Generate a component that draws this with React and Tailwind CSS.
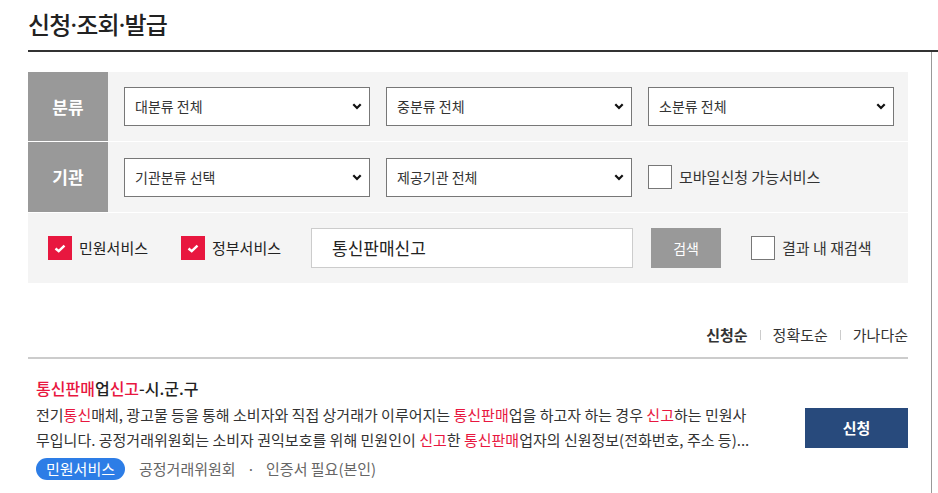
import React from 'react';

const font = { fontFamily: '"Noto Sans CJK KR", "Noto Sans", sans-serif' };
const latin = { fontFamily: '"Noto Sans", sans-serif' };

const Chevron = () => (
  <svg width="10" height="7" viewBox="0 0 10 7" className="shrink-0">
    <path d="M1.3 1.3 L5 5 L8.7 1.3" fill="none" stroke="#111" strokeWidth="2.2" />
  </svg>
);

const Select = ({ label }) => (
  <div className="flex h-[39px] w-[246px] items-center justify-between border border-[#777] bg-white pl-[10px] pr-[7px] text-[14px] text-[#333]">
    <span>{label}</span>
    <Chevron />
  </div>
);

const RedCheck = ({ label }) => (
  <div className="flex items-center gap-[7px]">
    <div className="flex h-6 w-6 items-center justify-center bg-[#e8173f]">
      <svg width="12" height="9" viewBox="0 0 12 9">
        <path d="M1.5 4.5 L4.7 7.2 L10.5 1.6" fill="none" stroke="#fff" strokeWidth="2.4" />
      </svg>
    </div>
    <span className="text-[15px] text-[#222]">{label}</span>
  </div>
);

const EmptyCheck = ({ label }) => (
  <div className="flex items-center gap-[7px]">
    <div className="h-6 w-6 border border-[#777] bg-white" />
    <span className="text-[15px] text-[#333]">{label}</span>
  </div>
);

const R = ({ children }) => <span className="text-[#e8173f]">{children}</span>;
const Dot = () => <span style={latin}>·</span>;

export default function App() {
  return (
    <div className="min-h-[493px] bg-white pl-[28px]" style={font}>
      <div className="flex h-[52px] items-center border-b-2 border-[#333] pb-[2px]">
        <h1 className="text-[24px] font-medium tracking-[-0.8px] text-[#222]">
          신청<Dot />조회<Dot />발급
        </h1>
      </div>

      <div className="w-[904px] border-r border-[#999] pt-[20px] pb-[20px]">
        <div className="w-[880px] bg-[#f4f4f4]">
          <div className="flex h-[70px] border-b border-white">
            <div className="flex w-[80px] items-center justify-center bg-[#999] text-[17px] font-bold text-white">분류</div>
            <div className="flex items-center gap-[16px] pl-[16px]">
              <Select label="대분류 전체" />
              <Select label="중분류 전체" />
              <Select label="소분류 전체" />
            </div>
          </div>
          <div className="flex h-[71px] border-b border-white">
            <div className="flex w-[80px] items-center justify-center bg-[#999] text-[17px] font-bold text-white">기관</div>
            <div className="flex items-center gap-[16px] pl-[16px]">
              <Select label="기관분류 선택" />
              <Select label="제공기관 전체" />
              <EmptyCheck label="모바일신청 가능서비스" />
            </div>
          </div>
          <div className="flex h-[70px] items-center pl-[20px]">
            <RedCheck label="민원서비스" />
            <div className="ml-[33px]">
              <RedCheck label="정부서비스" />
            </div>
            <div className="ml-[30px] flex h-[40px] w-[322px] items-center border border-[#ccc] bg-white pl-[20px] text-[17px] text-[#222]">
              통신판매신고
            </div>
            <div className="ml-[18px] flex h-[40px] w-[70px] items-center justify-center bg-[#999] text-[14px] text-white">검색</div>
            <div className="ml-[30px]">
              <EmptyCheck label="결과 내 재검색" />
            </div>
          </div>
        </div>

        <div className="mt-[41px] flex w-[880px] items-center justify-end gap-[12px] text-[15px] text-[#333]">
          <span className="font-bold">신청순</span>
          <span className="h-[10px] w-px bg-[#ccc]" />
          <span>정확도순</span>
          <span className="h-[10px] w-px bg-[#ccc]" />
          <span>가나다순</span>
        </div>
        <div className="mt-[10px] h-[2px] w-[880px] bg-[#ccc]" />

        <div className="flex w-[880px] items-center justify-between pt-[17px] pl-[8px]">
          <div>
            <div className="text-[16px] font-medium text-[#222]">
              <R>통신판매</R>업<R>신고</R>-시.군.구
            </div>
            <p className="mt-[2px] whitespace-nowrap text-[15px] leading-[25px] text-[#333]">
              전기<R>통신</R>매체, 광고물 등을 통해 소비자와 직접 상거래가 이루어지는 <R>통신판매</R>업을 하고자 하는 경우 <R>신고</R>하는 민원사
              <br />
              무입니다. 공정거래위원회는 소비자 권익보호를 위해 민원인이 <R>신고</R>한 <R>통신판매</R>업자의 신원정보(전화번호, 주소 등)...
            </p>
            <div className="mt-[6px] flex items-center text-[15px]">
              <span className="flex h-[22px] items-center rounded-full bg-[#2d7de6] px-[10px] text-white">민원서비스</span>
              <span className="ml-[14px] text-[#666]">공정거래위원회</span>
              <span className="mx-[11px] text-[#666]">·</span>
              <span className="text-[#666]">인증서 필요(본인)</span>
            </div>
          </div>
          <div className="flex h-[40px] w-[103px] items-center justify-center bg-[#284a7c] text-[15px] font-bold text-white">신청</div>
        </div>
      </div>
    </div>
  );
}
